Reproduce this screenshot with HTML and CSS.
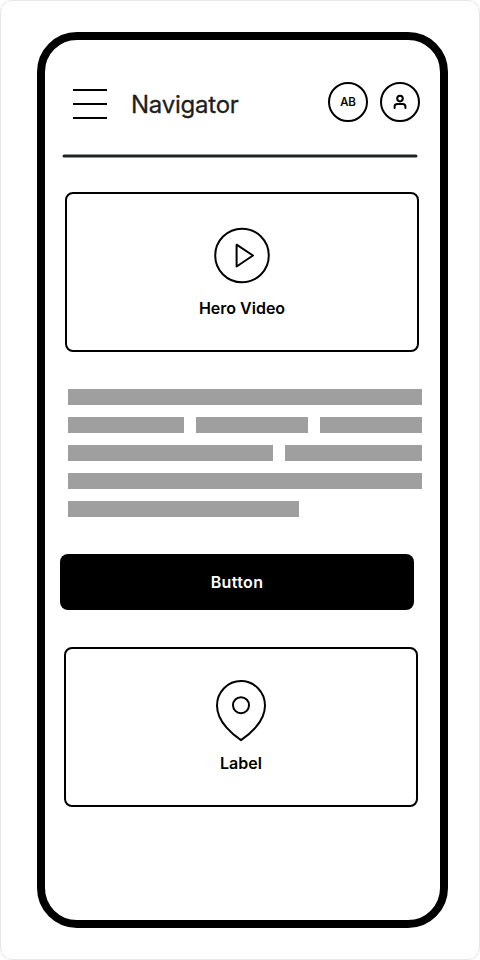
FILE: index.html
```html
<!DOCTYPE html>
<html lang="en">
<head>
<meta charset="utf-8">
<title>Navigator</title>
<link rel="stylesheet" href="styles.css">
</head>
<body>
<div class="canvas">
  <main class="phone">
    <header class="header">
      <div class="menu"><span></span><span></span><span></span></div>
      <h1 class="title">Navigator</h1>
      <div class="avatar initials">AB</div>
      <div class="avatar">
        <svg width="16" height="16" viewBox="0 0 16 16" fill="none" stroke="#000" stroke-width="2" stroke-linecap="round"><circle cx="8" cy="4.6" r="2.8"/><path d="M2.6 14V12.6Q2.6 10 5.2 10H10.8Q13.4 10 13.4 12.6V14"/></svg>
      </div>
    </header>
    <svg class="divider" width="356" height="4" viewBox="0 0 356 4"><path d="M2 2H354" stroke="#1e2220" stroke-width="3" stroke-linecap="round"/></svg>
    <section class="card video">
      <svg width="58" height="58" viewBox="0 0 58 58" fill="none" stroke="#000" stroke-width="2" stroke-linejoin="round"><circle cx="29" cy="29.5" r="26.8"/><path d="M23.6 18.7L40 29.5L23.6 40.5Z"/></svg>
      <div class="caption">Hero Video</div>
    </section>
    <section class="copy">
      <div class="line full"><i></i></div>
      <div class="line three"><i></i><i></i><i></i></div>
      <div class="line two"><i></i><i></i></div>
      <div class="line full"><i></i></div>
      <div class="line short"><i></i></div>
    </section>
    <button class="button">Button</button>
    <section class="card place">
      <svg width="54" height="64" viewBox="0 0 54 64" fill="none" stroke="#000" stroke-width="2" stroke-linejoin="round"><path d="M27 61.2C20 56.5 3 43.5 3 26.5A24 24.5 0 0 1 51 26.5C51 43.5 34 56.5 27 61.2Z"/><circle cx="27" cy="26.2" r="8"/></svg>
      <div class="caption">Label</div>
    </section>
  </main>
</div>
</body>
</html>
```
FILE: styles.css
```css
* { box-sizing: border-box; }
body { margin: 0; background: #fff; font-family: Inter, "Liberation Sans", sans-serif; }
.canvas { width: 480px; height: 960px; padding: 31px 0 0 36px; border: 1px solid #e6e6e6; border-radius: 12px; }
.phone { display: flex; flex-direction: column; align-items: flex-start; width: 411px; height: 896px; padding: 42px 0 0 15px; border: 8px solid #000; border-radius: 40px; }
.header { display: flex; align-items: center; width: 360px; height: 40px; padding-left: 13px; }
.menu { display: flex; flex-direction: column; gap: 12px; width: 34px; margin-top: 4px; }
.menu span { height: 2px; background: #000; }
.title { flex: 1; margin: 6px 0 0 24px; font-size: 24px; line-height: 30px; font-weight: 400; letter-spacing: -0.24px; color: #1e1e1e; -webkit-text-stroke: 0.3px #1e1e1e; }
.avatar { display: flex; align-items: center; justify-content: center; width: 40px; height: 40px; border: 2px solid #000; border-radius: 50%; }
.avatar + .avatar { margin-left: 12px; }
.initials { font-size: 11.5px; font-weight: 500; line-height: 16px; -webkit-text-stroke: 0.2px #000; }
.divider { display: block; margin: 32px 0 0 2px; }
.card { display: flex; flex-direction: column; align-items: center; width: 354px; height: 160px; border: 2px solid #000; border-radius: 8px; }
.card svg { display: block; }
.video { margin: 34px 0 0 5px; padding-top: 32px; }
.caption { font-size: 16px; line-height: 20px; font-weight: 600; }
.video .caption { margin-top: 14px; }
.copy { display: grid; gap: 12px; width: 354px; margin: 37px 0 0 8px; }
.line { display: grid; gap: 12px; height: 16px; }
.line i { background: #9f9f9f; }
.full { grid-template-columns: 354px; }
.three { grid-template-columns: 116px 112px 102px; }
.two { grid-template-columns: 205px 137px; }
.short { grid-template-columns: 231px; }
.button { width: 354px; height: 56px; margin: 37px 0 0; padding: 0; border: 0; border-radius: 8px; background: #000; color: #fff; font: 600 16px/20px Inter, "Liberation Sans", sans-serif; letter-spacing: 0.35px; }
.place { margin: 37px 0 0 4px; padding-top: 30px; }
.place .caption { margin-top: 10px; }
```
